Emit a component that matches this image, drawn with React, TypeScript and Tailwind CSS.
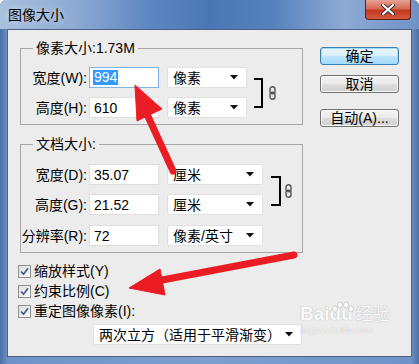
import React from 'react';

const font = "font-['Liberation_Sans','Noto_Sans_CJK_SC',sans-serif]";

const Caret: React.FC = () => (
  <svg width="8" height="5" viewBox="0 0 8 5" className="ml-auto mr-[8px]">
    <path d="M0 0 H8 L4 4.5 Z" fill="#111" />
  </svg>
);

const Select: React.FC<{ value: string; w: string }> = ({ value, w }) => (
  <div className={`${w} h-[21px] bg-white border border-[#e1e1e1] rounded-[2px] flex items-center pl-[5px]`}>
    <span className="leading-none">{value}</span>
    <Caret />
  </div>
);

const Input: React.FC<{ value: string; active?: boolean }> = ({ value, active }) => (
  <div
    className={`w-[70px] h-[21px] bg-white border flex items-center pl-[3px] ${
      active ? 'border-[#7eb4ea]' : 'border-[#dedede]'
    }`}
  >
    {active ? (
      <span className="bg-[#3399ff] text-white leading-[15px] px-[1px]">{value}</span>
    ) : (
      <span className="leading-none pl-[1px]">{value}</span>
    )}
  </div>
);

const LinkIcon: React.FC = () => (
  <svg width="7" height="14" viewBox="0 0 7 14">
    <rect x="1" y="0.8" width="5" height="7" rx="2.5" fill="none" stroke="#555" strokeWidth="1.4" />
    <rect x="1" y="6.2" width="5" height="7" rx="2.5" fill="none" stroke="#555" strokeWidth="1.4" />
  </svg>
);

const Row: React.FC<{ label: string; value: string; unit: string; sel: string; active?: boolean }> = ({
  label,
  value,
  unit,
  sel,
  active,
}) => (
  <div className="flex items-center h-[21px]">
    <div className="w-[66px] text-right leading-none whitespace-nowrap">{label}</div>
    <div className="ml-[2px]">
      <Input value={value} active={active} />
    </div>
    <div className="ml-[8px]">
      <Select value={unit} w={sel} />
    </div>
  </div>
);

const Checkbox: React.FC<{ label: string }> = ({ label }) => (
  <div className="flex items-center h-[20px]">
    <div className="w-[13px] h-[13px] border border-[#8e8f8f] bg-[linear-gradient(135deg,#dcdcdc,#ffffff)] flex items-center justify-center">
      <svg width="9" height="9" viewBox="0 0 9 9">
        <path d="M1 4.5 L3.5 7.2 L8 1.2" fill="none" stroke="#4a5f97" strokeWidth="1.8" />
      </svg>
    </div>
    <span className="ml-[3px] leading-none">{label}</span>
  </div>
);

const Button: React.FC<{ label: string; primary?: boolean; className?: string }> = ({ label, primary, className }) => (
  <div
    className={`w-[79px] h-[18px] rounded-[3px] border flex items-center justify-center leading-none ${
      primary
        ? 'border-[#3c7fb1] bg-[linear-gradient(#eaf6fd,#d9f0fc_50%,#bee6fd_51%,#a7d9f5)] shadow-[inset_0_0_0_1px_#9fdcf8]'
        : 'border-[#707070] bg-[linear-gradient(#f2f2f2,#ebebeb_50%,#dddddd_51%,#cfcfcf)] shadow-[inset_0_0_0_1px_#fcfcfc]'
    } ${className ?? ''}`}
  >
    {label}
  </div>
);

export default function App() {
  return (
    <div className={`${font} text-[14px] text-black relative w-[419px] h-[364px] overflow-hidden rounded-t-[6px] flex flex-col bg-[linear-gradient(90deg,#4d6fa3,#6f93c8_2%,#7d9fd0_50%,#6f93c8_98%,#4d6fa3)]`}>
      {/* title bar */}
      <div className="h-[29px] flex justify-between items-start shrink-0 bg-[linear-gradient(90deg,#a9c0de_0%,#8eaad3_18%,#5e88c3_35%,#4b76b5_50%,#5581bd_65%,#8eaad4_82%,#6f92c6_100%)]">
        <div className="pl-[8px] pt-[7px] leading-[16px] [text-shadow:0_0_6px_#dce8f6]">图像大小</div>
        <div className="mr-[8px] w-[46px] h-[20px] rounded-b-[4px] border border-t-0 border-[#5c1f17] bg-[linear-gradient(#e8a293,#d56b55_45%,#c2391f_55%,#d75a3c)] flex items-center justify-center">
          <svg width="14" height="11" viewBox="0 0 14 11">
            <path d="M2 1 L12 10 M12 1 L2 10" stroke="#3a2a2a" strokeWidth="4" strokeLinecap="round" />
            <path d="M2 1 L12 10 M12 1 L2 10" stroke="#fff" strokeWidth="2.2" strokeLinecap="round" />
          </svg>
        </div>
      </div>

      {/* client area */}
      <div className="mx-[7px] h-[328px] border border-[#4f6180] bg-[#ececec] flex">
        <div className="pl-[12px] pt-[18px] flex flex-col">
          {/* pixel size group */}
          <div className="w-[283px] border border-[#a8a8a8] pb-[6px]">
            <div className="-mt-[10px] ml-[12px] px-[3px] w-fit bg-[#ececec] leading-[18px]">像素大小:1.73M</div>
            <div className="mt-[10px] flex items-start">
              <div className="flex flex-col gap-[9px]">
                <Row label="宽度(W):" value="994" unit="像素" sel="w-[80px]" active />
                <Row label="高度(H):" value="610" unit="像素" sel="w-[80px]" />
              </div>
              <div className="ml-[7px] mt-[11px] flex items-center">
                <div className="w-[9px] h-[30px] border-2 border-l-0 border-black" />
                <div className="ml-[6px]">
                  <LinkIcon />
                </div>
              </div>
            </div>
          </div>

          {/* document size group */}
          <div className="mt-[19px] w-[283px] border border-[#a8a8a8] pb-[6px]">
            <div className="-mt-[10px] ml-[12px] px-[3px] w-fit bg-[#ececec] leading-[18px]">文档大小:</div>
            <div className="mt-[11px] flex items-start">
              <div className="flex flex-col gap-[9px]">
                <Row label="宽度(D):" value="35.07" unit="厘米" sel="w-[96px]" />
                <Row label="高度(G):" value="21.52" unit="厘米" sel="w-[96px]" />
                <div className="mt-[1px]">
                  <Row label="分辨率(R):" value="72" unit="像素/英寸" sel="w-[96px]" />
                </div>
              </div>
              <div className="ml-[8px] mt-[12px] flex items-center">
                <div className="w-[10px] h-[30px] border-2 border-l-0 border-black" />
                <div className="ml-[4px]">
                  <LinkIcon />
                </div>
              </div>
            </div>
          </div>

          {/* options */}
          <div className="mt-[8px] -ml-[2px] flex flex-col">
            <Checkbox label="缩放样式(Y)" />
            <Checkbox label="约束比例(C)" />
            <Checkbox label="重定图像像素(I):" />
          </div>
          <div className="mt-[3px] ml-[73px]">
            <Select value="两次立方（适用于平滑渐变）" w="w-[209px]" />
          </div>
        </div>

        {/* buttons */}
        <div className="ml-[17px] pt-[17px] flex flex-col">
          <Button label="确定" primary />
          <Button label="取消" className="mt-[10px]" />
          <Button label="自动(A)..." className="mt-[16px]" />
        </div>
      </div>

      {/* watermark */}
      <div className="absolute left-[300px] top-[304px] pointer-events-none flex flex-col items-start opacity-70">
        <div className="flex items-end leading-none">
          <span className="text-[19px] font-bold text-white [text-shadow:0_0_1px_#aaa,0_0_1px_#aaa]">Bai</span>
          <span className="text-[19px] font-bold text-white [text-shadow:0_0_1px_#aaa,0_0_1px_#aaa]">du</span>
          <span className="ml-[3px] text-[17px] text-white [text-shadow:0_0_1px_#aaa,0_0_1px_#aaa]">经验</span>
        </div>
        <div className="text-[9px] text-white leading-none mt-[3px] [text-shadow:0_0_1px_#999]">jingyan.baidu.com</div>
      </div>
      <svg className="absolute left-[330px] top-[301px] pointer-events-none opacity-70" width="26" height="18" viewBox="0 0 26 18">
        <g fill="#fff" stroke="#bbb" strokeWidth="0.8">
          <ellipse cx="5" cy="8" rx="2.5" ry="3" />
          <ellipse cx="10" cy="4" rx="2.5" ry="3" />
          <ellipse cx="16" cy="4" rx="2.5" ry="3" />
          <ellipse cx="21" cy="8" rx="2.5" ry="3" />
        </g>
      </svg>

      {/* red arrows */}
      <svg className="absolute left-0 top-0 pointer-events-none" width="419" height="364" viewBox="0 0 419 364">
        <g fill="#ec1c24" stroke="#ec1c24">
          <line x1="173" y1="171" x2="146" y2="112" strokeWidth="7" strokeLinecap="round" />
          <polygon points="135,85 137,121 162,109" strokeWidth="1" strokeLinejoin="round" />
          <line x1="294" y1="255" x2="157" y2="281" strokeWidth="7" strokeLinecap="round" />
          <polygon points="129,288 160,269 165,295" strokeWidth="1" strokeLinejoin="round" />
        </g>
      </svg>
    </div>
  );
}
